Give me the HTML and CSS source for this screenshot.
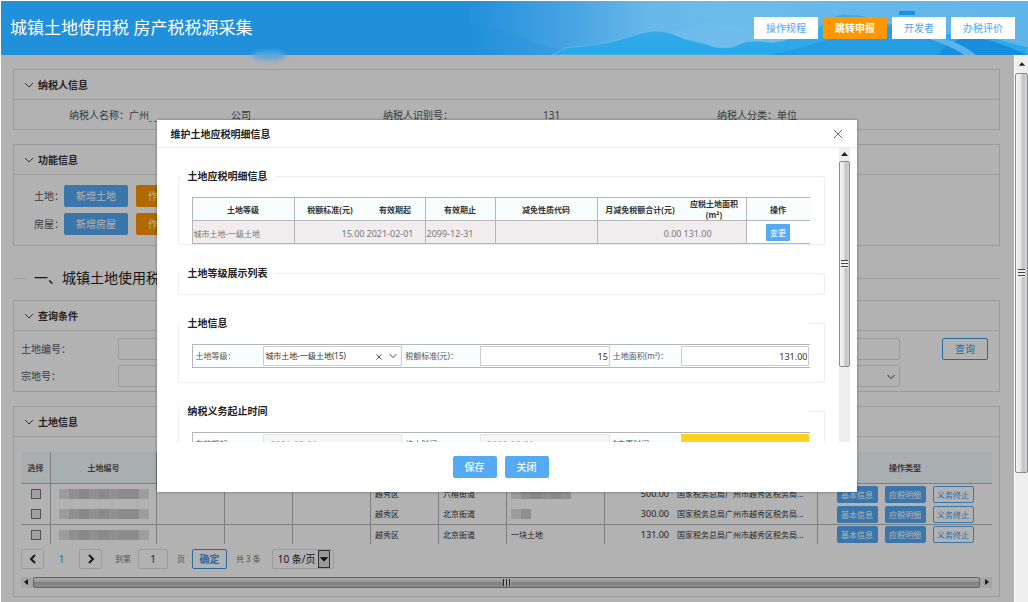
FILE: index.html
```html
<!DOCTYPE html>
<html lang="zh-CN">
<head>
    <meta charset="UTF-8">
    <meta name="viewport" content="width=device-width, initial-scale=1.0">
    <title>城镇土地使用税 房产税税源采集</title>
    <link rel="stylesheet" href="styles.css">
</head>
<body>

<header class="topbar">
    <svg class="scenery" viewBox="0 0 560 54" preserveAspectRatio="none" aria-hidden="true">
        <defs>
            <linearGradient id="sky" x1="0" x2="1" y1="0" y2="0">
                <stop offset="0" stop-color="#2190db"/>
                <stop offset="0.18" stop-color="#48a3e3"/>
                <stop offset="0.32" stop-color="#67b7e9"/>
                <stop offset="0.45" stop-color="#6cbbea"/>
                <stop offset="1" stop-color="#5fb4ea"/>
            </linearGradient>
            <linearGradient id="hill" x1="0" x2="0" y1="0" y2="1">
                <stop offset="0" stop-color="#3fa9e8"/>
                <stop offset="1" stop-color="#27a9ea"/>
            </linearGradient>
        </defs>
        <rect width="560" height="54" fill="url(#sky)"/>
        <path d="M0 24 C40 28 60 42 100 50 L85 54 H0 Z" fill="#2190db" opacity="0.25"/>
        <path d="M200 32 L226 24 L240 20 L256 25 L280 23 L320 32 V54 H200 Z" fill="#7cc5ef" opacity="0.25"/>
        <path d="M84 54 L97 47 C115 45 140 43 157 37 C170 33 180 30 187 30 C196 30 204 32 217 38 C228 40 238 43 247 46 C254 47 260 47 265 46 C272 43 278 40 286 40 C294 40 300 42 307 41 C322 39 336 33 350 27 C360 18 366 14 376 13 L392 14 C404 16 420 24 440 26 L470 34 L500 30 L560 46 V54 Z" fill="url(#hill)" stroke="#7cc4ef" stroke-opacity="0.5"/>
        <path d="M300 54 C340 46 360 38 390 30 C420 22 440 24 470 36 C486 42 500 48 512 54 Z" fill="#259de4"/>
        <path d="M470 54 C476 44 490 37 504 36 C528 40 546 48 560 54 Z" fill="#168ddd"/>
        <path d="M456 36 C476 36 494 42 508 54 H496 C488 48 474 42 456 36 Z" fill="#5db4ea"/>
        <rect x="431" y="10" width="16" height="4" fill="#1a92dc"/>
    </svg>
    <h1 class="topbar-title">城镇土地使用税 房产税税源采集</h1>
    <nav class="topbar-nav">
        <button class="nav-btn">操作规程</button>
        <button class="nav-btn active">跳转申报</button>
        <button class="nav-btn">开发者</button>
        <button class="nav-btn">办税评价</button>
    </nav>
</header>

<div class="page">
    <main class="content">
        <section class="panel">
            <h2 class="panel-title"><svg class="chevron" viewBox="0 0 10 6"><path d="M1 1l4 4 4-4"/></svg>纳税人信息</h2>
            <div class="taxpayer">
                <span>纳税人名称：广州<i class="redacted wide"></i>公司</span>
                <span>纳税人识别号：<i class="redacted"></i>131</span>
                <span>纳税人分类：单位</span>
            </div>
        </section>

        <section class="panel">
            <h2 class="panel-title"><svg class="chevron" viewBox="0 0 10 6"><path d="M1 1l4 4 4-4"/></svg>功能信息</h2>
            <div class="actions">
                <div class="action-row"><span>土地：</span><button class="btn">新增土地</button><button class="btn warn">作废土地</button></div>
                <div class="action-row"><span>房屋：</span><button class="btn">新增房屋</button><button class="btn warn">作废房屋</button></div>
            </div>
        </section>

        <h2 class="section-title">一、城镇土地使用税</h2>

        <section class="panel">
            <h2 class="panel-title"><svg class="chevron" viewBox="0 0 10 6"><path d="M1 1l4 4 4-4"/></svg>查询条件</h2>
            <form class="query">
                <label for="land-no">土地编号：</label>
                <input id="land-no" class="field" type="text">
                <label for="land-name"></label>
                <input id="land-name" class="field" type="text">
                <button class="btn outline" type="button">查询</button>
                <label for="parcel-no">宗地号：</label>
                <input id="parcel-no" class="field" type="text">
                <label for="land-state"></label>
                <div class="select-wrap">
                    <select id="land-state" class="field"><option></option></select>
                    <svg class="select-arrow" viewBox="0 0 10 6"><path d="M1.500 1l3.500 3.500L8.500 1"/></svg>
                </div>
            </form>
        </section>

        <section class="panel">
            <h2 class="panel-title"><svg class="chevron" viewBox="0 0 10 6"><path d="M1 1l4 4 4-4"/></svg>土地信息</h2>
            <div class="land">
                <table class="land-table">
                    <colgroup>
                        <col class="w-check"><col class="w-no"><col class="w-s"><col class="w-s"><col class="w-m"><col class="w-s"><col class="w-s"><col class="w-addr"><col class="w-s"><col><col class="w-ops">
                    </colgroup>
                    <thead>
                        <tr><th>选择</th><th>土地编号</th><th></th><th></th><th></th><th></th><th></th><th></th><th></th><th></th><th>操作类型</th></tr>
                    </thead>
                    <tbody>
                        <tr>
                            <td class="center"><input class="check" type="checkbox" aria-label="选择"></td>
                            <td><i class="mosaic"></i></td><td></td><td></td><td></td>
                            <td>越秀区</td><td>六榕街道</td><td><i class="mosaic mid"></i></td>
                            <td class="num">500.00</td><td class="org">国家税务总局广州市越秀区税务局...</td>
                            <td class="ops"><button class="mini">基本信息</button><button class="mini">应税明细</button><button class="mini outline">义务终止</button></td>
                        </tr>
                        <tr>
                            <td class="center"><input class="check" type="checkbox" aria-label="选择"></td>
                            <td><i class="mosaic"></i></td><td></td><td></td><td></td>
                            <td>越秀区</td><td>北京街道</td><td><i class="mosaic short"></i></td>
                            <td class="num">300.00</td><td class="org">国家税务总局广州市越秀区税务局...</td>
                            <td class="ops"><button class="mini">基本信息</button><button class="mini">应税明细</button><button class="mini outline">义务终止</button></td>
                        </tr>
                        <tr class="ruled">
                            <td class="center"><input class="check" type="checkbox" aria-label="选择"></td>
                            <td><i class="mosaic"></i></td><td></td><td></td><td></td>
                            <td>越秀区</td><td>北京街道</td><td>一块土地</td>
                            <td class="num">131.00</td><td class="org">国家税务总局广州市越秀区税务局...</td>
                            <td class="ops"><button class="mini">基本信息</button><button class="mini">应税明细</button><button class="mini outline">义务终止</button></td>
                        </tr>
                    </tbody>
                </table>

                <div class="pager">
                    <button class="page-btn" aria-label="上一页"><svg viewBox="0 0 8 10"><path d="M6 1L2 5l4 4"/></svg></button>
                    <span class="page-current">1</span>
                    <button class="page-btn" aria-label="下一页"><svg viewBox="0 0 8 10"><path d="M2 1l4 4-4 4"/></svg></button>
                    <label class="page-note" for="page-no">到第</label>
                    <input id="page-no" class="page-input" type="text" value="1">
                    <span class="page-note">页</span>
                    <button class="page-ok">确定</button>
                    <span class="page-note">共 3 条</span>
                    <div class="page-size">
                        <select aria-label="每页条数"><option>10 条/页</option></select>
                        <svg class="page-size-arrow" viewBox="0 0 12 18"><path d="M1 7h10L6 12z"/></svg>
                    </div>
                </div>

                <div class="hscroll">
                    <svg class="arrow" viewBox="0 0 12 11"><path d="M7 2v6L3 5z"/></svg>
                    <div class="hthumb"><i class="grip"></i></div>
                    <svg class="arrow" viewBox="0 0 12 11"><path d="M5 2v6l4-3z"/></svg>
                </div>
            </div>
        </section>

        <div class="overlay">
            <div class="modal" role="dialog" aria-labelledby="modal-title">
                <div class="modal-head">
                    <h2 id="modal-title">维护土地应税明细信息</h2>
                    <button class="modal-close" aria-label="关闭"><svg viewBox="0 0 10 10"><path d="M1 1l8 8M9 1l-8 8"/></svg></button>
                </div>
                <div class="modal-body">
                    <div class="modal-scroll">
                        <fieldset class="group">
                            <legend>土地应税明细信息</legend>
                            <table class="detail">
                                <colgroup>
                                    <col class="d1"><col class="d2"><col class="d3"><col class="d4"><col class="d5"><col class="d6"><col class="d7"><col>
                                </colgroup>
                                <thead>
                                    <tr><th>土地等级</th><th class="open">税额标准(元)</th><th>有效期起</th><th>有效期止</th><th>减免性质代码</th><th class="open">月减免税额合计(元)</th><th>应税土地面积<br>(m²)</th><th class="open">操作</th></tr>
                                </thead>
                                <tbody>
                                    <tr><td>城市土地-一级土地</td><td class="open right">15.00</td><td class="digits">2021-02-01</td><td class="digits">2099-12-31</td><td></td><td class="open right">0.00</td><td class="digits">131.00</td><td class="open op"><button class="change">变更</button></td></tr>
                                </tbody>
                            </table>
                        </fieldset>

                        <fieldset class="group">
                            <legend>土地等级展示列表</legend>
                        </fieldset>

                        <fieldset class="group roomy">
                            <legend>土地信息</legend>
                            <div class="form-row">
                                <label for="grade">土地等级：</label>
                                <div class="cell select-wrap">
                                    <select id="grade"><option>城市土地-一级土地(15)</option></select>
                                    <svg class="select-clear" viewBox="0 0 6 6"><path d="M.5.5l5 5M5.500.5l-5 5"/></svg>
                                    <svg class="select-arrow" viewBox="0 0 10 6"><path d="M1.500 1l3.500 3.500L8.500 1"/></svg>
                                </div>
                                <label for="rate">税额标准(元)：</label>
                                <div class="cell"><input id="rate" type="text" value="15"></div>
                                <label for="area">土地面积(m²)：</label>
                                <div class="cell"><input id="area" type="text" value="131.00"></div>
                            </div>
                        </fieldset>

                        <fieldset class="group roomy">
                            <legend>纳税义务起止时间</legend>
                            <div class="form-row">
                                <label for="from">有效期起：</label>
                                <div class="cell"><input id="from" class="locked" type="text" value="2021-02-01" readonly></div>
                                <label for="to">终止时间：</label>
                                <div class="cell"><input id="to" class="locked" type="text" value="2099-12-31" readonly></div>
                                <label for="changed"><b class="star">*</b>变更时间：</label>
                                <div class="cell"><input id="changed" class="required" type="text"></div>
                            </div>
                        </fieldset>
                    </div>
                    <div class="vscroll">
                        <svg class="arrow" viewBox="0 0 11 13"><path d="M2 8h7L5.500 4z"/></svg>
                        <div class="vthumb"><i class="grip"></i></div>
                    </div>
                </div>
                <div class="modal-foot">
                    <button class="btn">保存</button>
                    <button class="btn">关闭</button>
                </div>
            </div>
        </div>
    </main>

    <div class="vscroll outer">
        <svg class="arrow" viewBox="0 0 14 18"><path d="M4 11h7L7.500 7z"/></svg>
        <div class="vthumb"><i class="grip"></i></div>
    </div>
</div>

</body>
</html>
```

FILE: styles.css
```css
* {
    margin: 0;
    padding: 0;
    box-sizing: border-box;
}

body {
    display: flex;
    flex-direction: column;
    height: 100vh;
    padding: 1px 0 0 1px;
    background: #fff;
    color: #333;
    font: 10px/16px "Noto Sans", "Noto Sans CJK SC", sans-serif;
    overflow: hidden;
}

button, input, select {
    font: inherit;
    color: inherit;
    outline: none;
}

button {
    border: none;
    cursor: pointer;
    white-space: nowrap;
}

svg path {
    vector-effect: non-scaling-stroke;
}

/* Header */
.topbar {
    display: flex;
    align-items: center;
    justify-content: space-between;
    flex: none;
    height: 54px;
    padding: 0 13px 0 9px;
    background: #2190db;
    position: relative;
}

/* light spot under the bar */
.topbar::after {
    content: "";
    position: absolute;
    left: 251px;
    top: 50px;
    width: 34px;
    height: 9px;
    border-radius: 50%;
    background: #5ba7db;
    filter: blur(2px);
    z-index: 2;
}

.scenery {
    position: absolute;
    top: 0;
    right: 0;
    width: 560px;
    height: 54px;
}

.topbar-title {
    position: relative;
    color: #fff;
    font-size: 17px;
    font-weight: 400;
    line-height: 24px;
}

.topbar-nav {
    display: flex;
    gap: 5px;
    position: relative;
}

.nav-btn {
    height: 22px;
    padding: 0 12px;
    background: #fff;
    color: #4da6f0;
    line-height: 20px;
}

.nav-btn.active {
    background: #ff9700;
    color: #fff;
    font-weight: 700;
    border-radius: 2px;
}

/* Page */
.page {
    display: flex;
    flex: 1;
    min-height: 0;
}

.content {
    flex: 1;
    min-width: 0;
    padding: 14px 14px 0 12px;
    position: relative;
    overflow: hidden;
}

.panel {
    border: 1px solid #dedede;
    margin-bottom: 14px;
}

.panel-title {
    display: flex;
    align-items: center;
    gap: 4px;
    height: 30px;
    padding-left: 10px;
    border-bottom: 1px solid #dedede;
    font-size: 10px;
    font-weight: 700;
}

.chevron {
    width: 10px;
    height: 6px;
    fill: none;
    stroke: #444;
}

.taxpayer {
    display: grid;
    grid-template-columns: 314fr 334fr 282fr;
    align-items: center;
    height: 29px;
    padding-left: 55px;
    color: #555;
}

.redacted {
    display: inline-block;
    width: 90px;
    height: 12px;
    vertical-align: middle;
    border-bottom: 1px dashed #999;
}

.redacted.wide {
    width: 82px;
}

.actions {
    display: grid;
    gap: 6px;
    padding: 10px 20px;
    color: #555;
}

.action-row {
    display: flex;
    gap: 8px;
}

.action-row span {
    width: 22px;
    line-height: 22px;
    white-space: nowrap;
}

.btn {
    height: 22px;
    padding: 0 12px;
    background: #54aaf3;
    border-radius: 2px;
    color: #fff;
    line-height: 20px;
}

.btn.warn {
    background: #ff9700;
}

.btn.outline {
    background: none;
    border: 1px solid #3b97e8;
    color: #3b97e8;
}

.section-title {
    display: flex;
    align-items: center;
    gap: 7px;
    margin: 22px 0 12px;
    color: #222;
    font-size: 14px;
    font-weight: 400;
    line-height: 20px;
}

.section-title::before,
.section-title::after {
    content: "";
    width: 14px;
    height: 1px;
    background: #dedede;
}

.section-title::after {
    flex: 1;
}

/* Query form */
.query {
    display: grid;
    grid-template-columns: 97px 1fr 97px 1fr 88px;
    gap: 5px 0;
    padding: 7px 11px 3px 7px;
    color: #555;
    line-height: 22px;
}

.query .btn {
    justify-self: end;
}

.field {
    width: 100%;
    height: 22px;
    padding: 0 6px;
    border: 1px solid #dedede;
    border-radius: 2px;
    background: #fff;
    appearance: none;
}

.select-wrap {
    position: relative;
}

.select-arrow {
    position: absolute;
    right: 4px;
    top: 50%;
    width: 10px;
    height: 6px;
    margin-top: -3px;
    fill: none;
    stroke: #444;
    pointer-events: none;
}

/* Land table */
.land {
    padding: 15px 7px 8px;
}

.land-table {
    width: 100%;
    table-layout: fixed;
    border-collapse: separate;
    border-spacing: 0;
    font-size: 8px;
    line-height: 12px;
    white-space: nowrap;
}

.w-check { width: 30px; }
.w-no { width: 106px; }
.w-s { width: 68px; }
.w-m { width: 78px; }
.w-addr { width: 98px; }
.w-ops { width: 174px; }

.land-table th {
    height: 32px;
    background: #f3fbfd;
    border-right: 1px solid #b5b5b5;
    border-bottom: 1px solid #b5b5b5;
    color: #555;
}

.land-table td {
    height: 20px;
    padding: 0 4px;
    border-right: 1px solid #b5b5b5;
    color: #333;
}

.land-table .ruled td {
    border-top: 1px solid #b5b5b5;
}

.land-table .center {
    padding: 0;
    text-align: center;
}

.land-table .num {
    border-right: none;
    font-size: 9px;
    text-align: right;
}

.land-table th:last-child,
.land-table .ops {
    padding: 0;
    border-right: none;
    text-align: center;
}

.check {
    display: block;
    width: 10px;
    height: 10px;
    margin: 0 auto;
    border: 1px solid #777;
    background: #e6e6e6;
    appearance: none;
}

.check:checked {
    background: #3b97e8;
}

/* pixelated values */
.mosaic {
    display: block;
    width: 90px;
    height: 10px;
    margin-left: 4px;
    background: linear-gradient(90deg, #e0e0e0 0 10px, #cdcdcd 10px 20px, #c2c2c2 20px 30px, #cdcdcd 30px 40px, #c6c6c8 40px 50px, #cfcfcf 50px 60px, #c8c8c8 60px 80px, #e2e2e2 80px);
}

.mosaic.mid {
    width: 60px;
    margin-left: 0;
}

.mosaic.short {
    width: 20px;
    margin-left: 0;
}

.ops {
    font-size: 0;
}

.mini {
    width: 41px;
    height: 17px;
    border-radius: 2px;
    background: #54aaf3;
    color: #fff;
    font-size: 8px;
    line-height: 15px;
    vertical-align: middle;
}

.mini + .mini {
    margin-left: 7px;
}

.mini.outline {
    border: 1px solid #54aaf3;
    background: #fff;
    color: #3b97e8;
}

/* Pager */
.pager {
    display: flex;
    align-items: center;
    height: 20px;
    margin: 5px 0 8px;
}

.page-btn,
.page-input,
.page-ok,
.page-size {
    height: 20px;
    border: 1px solid #dedede;
    border-radius: 2px;
    background: none;
}

.page-btn {
    display: flex;
    align-items: center;
    justify-content: center;
    width: 23px;
}

.page-btn svg {
    width: 8px;
    height: 10px;
    fill: none;
    stroke: #222;
    stroke-width: 2;
}

.page-current {
    width: 35px;
    color: #3b97e8;
    text-align: center;
}

.page-note {
    margin: 0 7px 0 9px;
    color: #777;
    font-size: 8px;
    white-space: nowrap;
}

label.page-note {
    margin-left: 13px;
}

.page-input {
    width: 30px;
    text-align: center;
}

.page-ok {
    width: 35px;
    border-color: #3b97e8;
    color: #3b97e8;
    font-weight: 700;
    line-height: 18px;
}

.page-size {
    position: relative;
    width: 62px;
    margin-left: 4px;
}

.page-size select {
    width: 100%;
    height: 18px;
    padding-left: 5px;
    border: none;
    background: none;
    color: #222;
    appearance: none;
}

.page-size-arrow {
    position: absolute;
    right: 3px;
    top: 0;
    width: 12px;
    height: 18px;
    border: 1px solid #444;
    background: #ddd;
    fill: #000;
    pointer-events: none;
}

/* Scrollbars */
.arrow {
    flex: none;
    fill: #222;
}

.hscroll {
    display: flex;
    height: 11px;
    background: #eee;
}

.hscroll .arrow {
    width: 12px;
    height: 11px;
}

.hthumb,
.vthumb {
    display: flex;
    align-items: center;
    justify-content: center;
    border: 1px solid #8c8c8c;
    border-radius: 2px;
}

.hthumb {
    flex: 1;
    background: linear-gradient(#f2f2f2, #d8d8da 45%, #b9b9bd 50%, #c9c9cb);
}

.hthumb .grip {
    width: 8px;
    height: 7px;
    background: repeating-linear-gradient(90deg, #333 0 1px, #eee 1px 3px);
}

.vscroll {
    flex: none;
    display: flex;
    flex-direction: column;
    width: 11px;
    background: #eee;
}

.vscroll .arrow {
    width: 11px;
    height: 13px;
}

.vthumb {
    height: 206px;
    background: linear-gradient(90deg, #f5f5f5, #e4e4e6 45%, #c2c2c7 60%, #d4d4d6);
}

.vthumb .grip {
    width: 7px;
    height: 8px;
    background: repeating-linear-gradient(#444 0 1px, #eee 1px 3px);
}

.vscroll.outer {
    width: 14px;
    border-left: 1px solid #fff;
}

.outer .arrow {
    width: 13px;
    height: 18px;
}

.outer .vthumb {
    height: 400px;
}

/* Modal */
.overlay {
    position: absolute;
    inset: 0;
    display: flex;
    align-items: flex-start;
    justify-content: center;
    padding: 65px 2px 0 0;
    background: rgba(0, 0, 0, 0.3);
}

.modal {
    width: 100%;
    max-width: 700px;
    background: #fff;
    box-shadow: 0 0 3px rgba(0, 0, 0, 0.4);
}

.modal-head {
    display: flex;
    align-items: center;
    justify-content: space-between;
    height: 28px;
    padding: 0 14px;
    border-bottom: 1px solid #eee;
}

.modal-head h2 {
    color: #222;
    font-size: 10px;
    font-weight: 700;
}

.modal-close {
    width: 10px;
    height: 10px;
    background: none;
}

.modal-close svg {
    display: block;
    fill: none;
    stroke: #666;
}

.modal-body {
    display: flex;
    height: 294px;
    padding-right: 7px;
}

.modal-scroll {
    flex: 1;
    padding: 20px 14px 0 21px;
    overflow: hidden;
}

.group {
    margin-bottom: 20px;
    padding: 13px 14px 0 13px;
    border: 1px solid #eee;
    border-radius: 2px;
}

.group legend {
    margin-left: -11px;
    padding: 0 7px;
    color: #222;
    font-weight: 700;
}

.group.roomy {
    padding-bottom: 14px;
}

/* the caption hides the top line up to the table edge */
.group.roomy legend {
    width: calc(100% + 11px);
}

.detail {
    width: 100%;
    table-layout: fixed;
    border-collapse: separate;
    border-spacing: 0;
    border-top: 1px solid #b5b5b5;
    border-left: 1px solid #b5b5b5;
    font-size: 8px;
    line-height: 11px;
    white-space: nowrap;
}

.d1 { width: 102px; }
.d2 { width: 71px; }
.d3 { width: 60px; }
.d4 { width: 70px; }
.d5 { width: 102px; }
.d6 { width: 85px; }
.d7 { width: 64px; }

.detail th,
.detail td {
    height: 23px;
    border-right: 1px solid #b5b5b5;
    border-bottom: 1px solid #b5b5b5;
}

.detail th {
    background: #f8fdfe;
    color: #333;
}

.detail td {
    padding: 2px 1px 0;
    background: #f1edef;
    color: #777;
    text-align: left;
}

.detail .open {
    border-right: none;
}

.detail .right {
    font-size: 9px;
    text-align: right;
}

.detail .digits {
    font-size: 9px;
}

.detail .op {
    padding: 0;
    background: #fff;
    text-align: center;
}

.change {
    width: 24px;
    height: 17px;
    border-radius: 1px;
    background: #54aaf3;
    color: #fff;
    font-size: 8px;
    line-height: 15px;
    vertical-align: middle;
}

.form-row {
    display: grid;
    grid-template-columns: 71fr 139fr 78fr 130fr 71fr 129fr;
    height: 24px;
    border: 1px solid #b5b5b5;
    border-right: none;
    font-size: 8px;
}

.form-row label {
    padding-left: 3px;
    background: #f8fdfe;
    color: #555;
    line-height: 22px;
    white-space: nowrap;
}

.form-row .cell {
    display: flex;
    padding: 1px 0;
}

.form-row input,
.form-row select {
    width: 100%;
    min-width: 0;
    height: 20px;
    padding: 0 1px;
    border: 1px solid #ccc;
    background: #fff;
    color: #333;
    appearance: none;
}

.form-row input {
    font-size: 9px;
    text-align: right;
}

.form-row .locked {
    padding-left: 6px;
    border-color: #e6e6e6;
    background: #f6f6f6;
    color: #aaa;
    text-align: left;
}

.form-row .required {
    border-color: #ffd11f;
    background: #ffd11f;
}

.select-clear {
    position: absolute;
    right: 20px;
    top: 9px;
    width: 6px;
    height: 6px;
    fill: none;
    stroke: #555;
    pointer-events: none;
}

.star {
    color: #e33;
}

.modal-foot {
    display: flex;
    align-items: center;
    justify-content: center;
    gap: 8px;
    height: 50px;
    padding-right: 12px;
}

.modal-foot .btn {
    font-weight: 500;
}
```
